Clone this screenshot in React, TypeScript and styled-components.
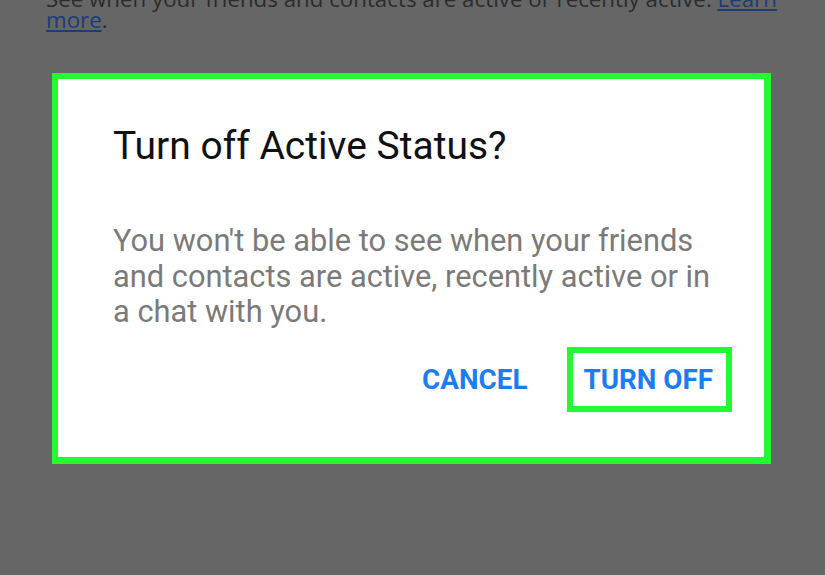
import styled, { createGlobalStyle } from "styled-components";

const GlobalStyle = createGlobalStyle`
  html,
  body {
    margin: 0;
    padding: 0;
    background: #666666;
  }

  body {
    overflow: hidden;
  }
`;

const Page = styled.div`
  width: 825px;
  height: 575px;
  overflow: hidden;
  background: #666666;
`;

const Intro = styled.p`
  margin: -12px 0 0 46px;
  width: 760px;

  font-family: "Open Sans", "Noto Sans", sans-serif;
  font-size: 22.3px;
  line-height: 21px;
  color: #2c2c2c;

  a {
    color: #1b3d74;
    text-decoration: underline;
  }
`;

const Dialog = styled.section`
  box-sizing: border-box;
  width: 719px;
  height: 391px;
  margin: 43px 0 0 52px;
  padding: 45px 32px 0 55px;

  background: #ffffff;
  border: 7px solid #22f933;
  border-top-width: 6px;
  border-left-width: 6px;

  font-family: Roboto, "Liberation Sans", sans-serif;
`;

const Title = styled.h2`
  margin: 0;
  font-size: 39px;
  font-weight: 400;
  line-height: 44px;
  color: #111111;
`;

const Message = styled.p`
  max-width: 612px;
  margin: 55px 0 0;
  font-size: 30.8px;
  line-height: 35.5px;
  color: #7a7a7a;
`;

const Actions = styled.div`
  display: flex;
  justify-content: flex-end;
  align-items: center;
  gap: 21px;
  margin-top: 17px;
`;

const ActionButton = styled.button<{ $highlight?: boolean }>`
  box-sizing: border-box;
  height: 65px;
  padding: 0 13px 0 10px;

  font-family: Roboto, "Liberation Sans", sans-serif;
  font-size: 27.8px;
  font-weight: 700;
  color: #1a7ef2;
  text-transform: uppercase;

  background: #ffffff;
  border: 6px solid ${(p) => (p.$highlight ? "#22f933" : "transparent")};
  cursor: pointer;
`;

export default function App() {
  return (
    <Page>
      <GlobalStyle />
      <Intro>
        See when your friends and contacts are active or recently active.{" "}
        <a href="#">Learn more</a>.
      </Intro>
      <Dialog role="dialog">
        <Title>Turn off Active Status?</Title>
        <Message>
          You won't be able to see when your friends and contacts are active,
          recently active or in a chat with you.
        </Message>
        <Actions>
          <ActionButton>Cancel</ActionButton>
          <ActionButton $highlight>Turn off</ActionButton>
        </Actions>
      </Dialog>
    </Page>
  );
}
